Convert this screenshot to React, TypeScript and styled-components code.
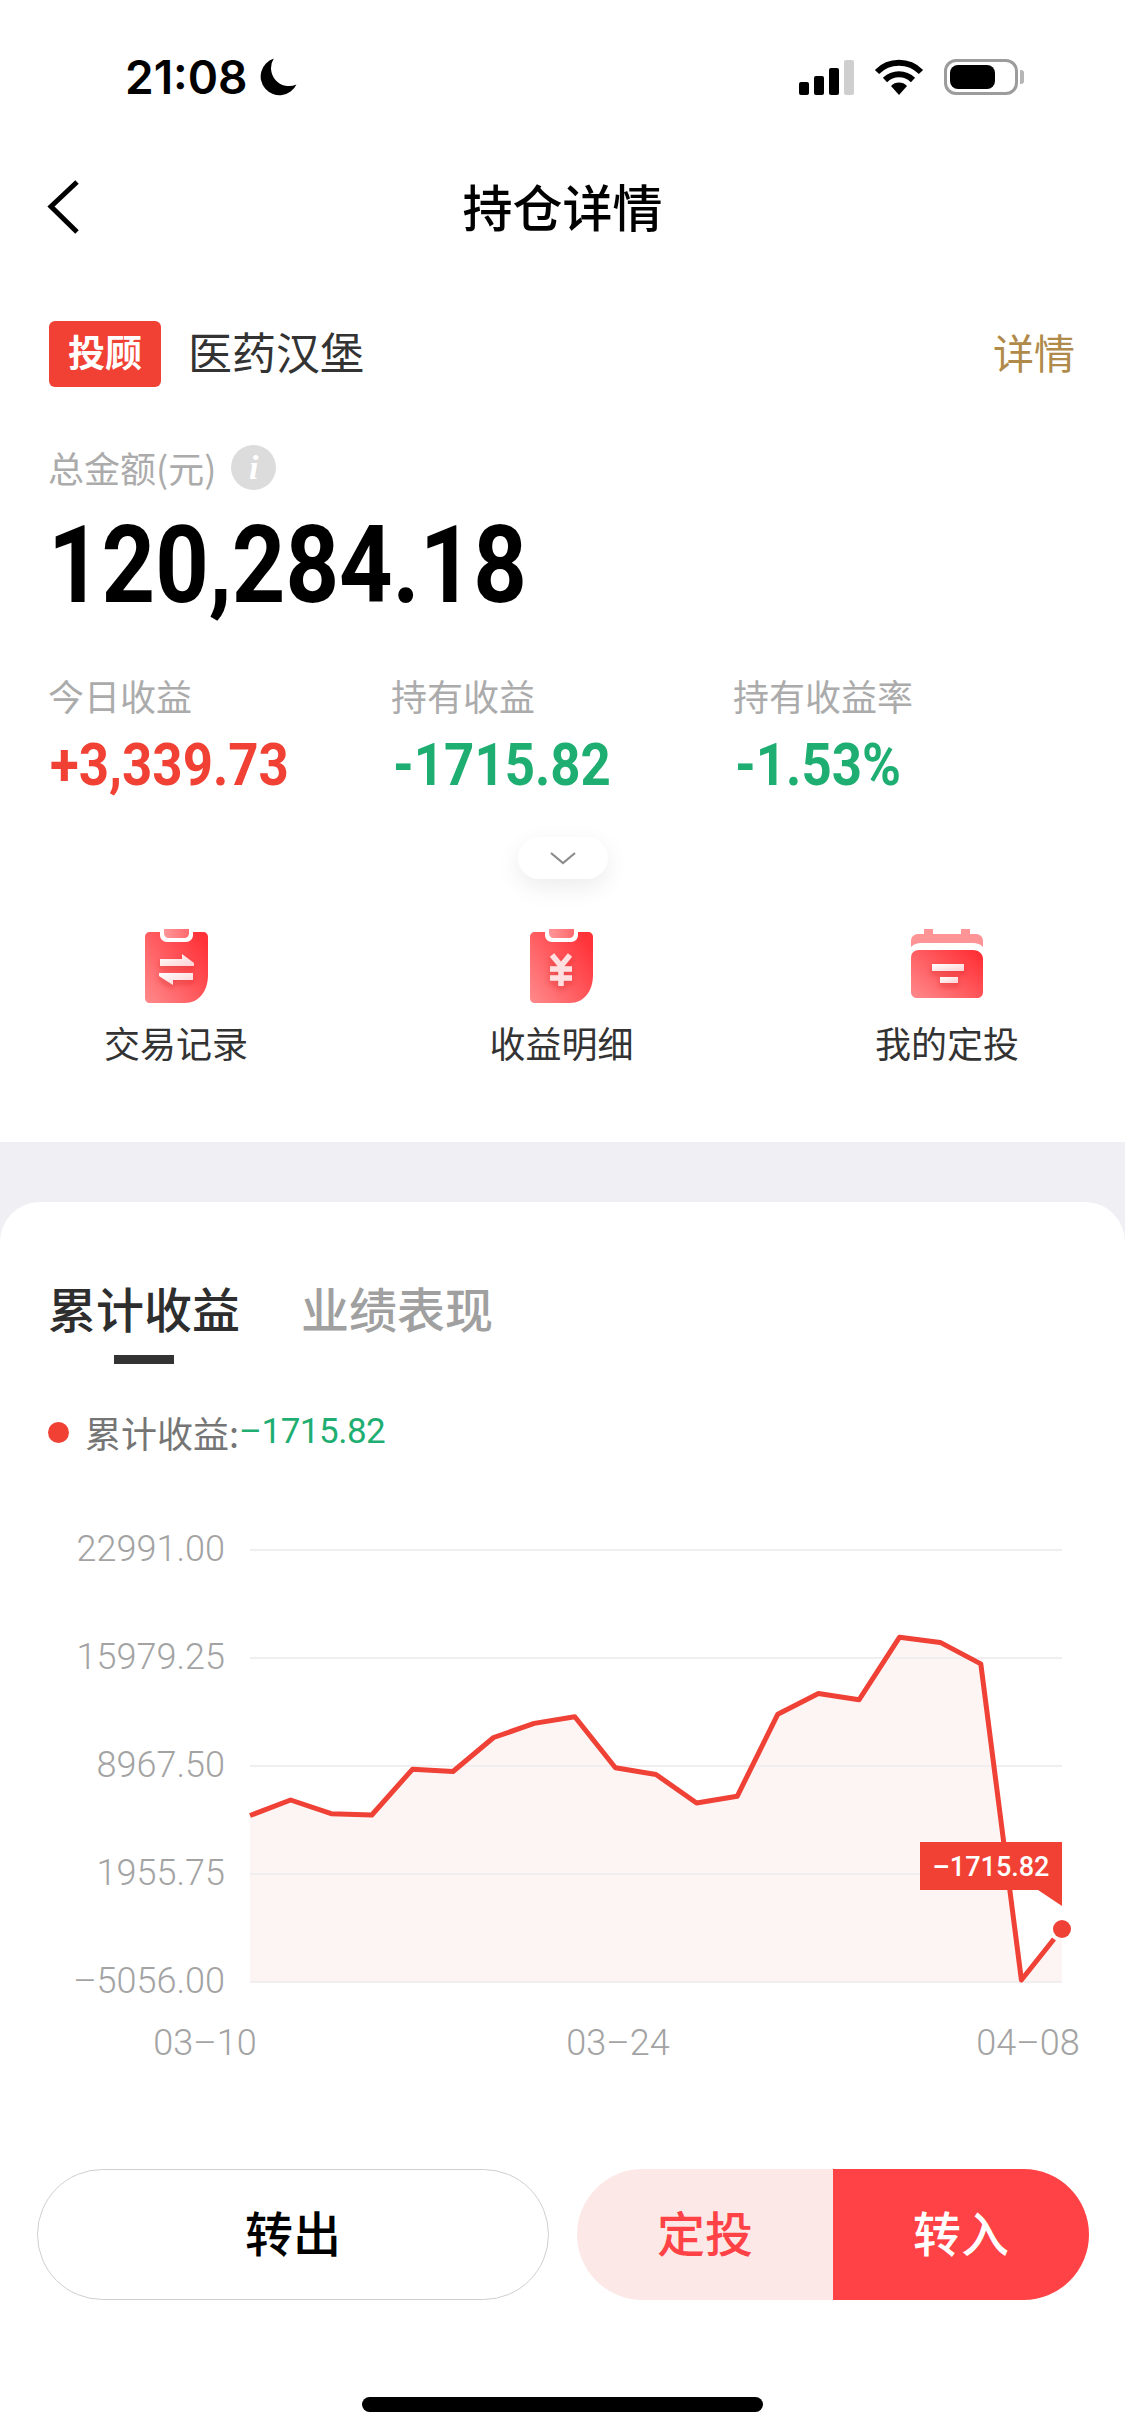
import React from "react";
import styled, { createGlobalStyle } from "styled-components";

const Global = createGlobalStyle`
  html, body { margin: 0; padding: 0; background: #f0f0f4; }
  body { font-family: Roboto, "Noto Sans CJK SC", sans-serif; }
  * { box-sizing: border-box; }
`;

const cjk = `"Noto Sans CJK SC", Roboto, sans-serif`;

const Page = styled.div`
  width: 1125px;
  height: 2436px;
  display: flex;
  flex-direction: column;
  background: #f0f0f4;
  overflow: hidden;
`;
const TopSection = styled.section`
  height: 1142px;
  background: #fff;
  display: flex;
  flex-direction: column;
  flex: none;
`;
const StatusBar = styled.div`
  height: 154px;
  display: flex;
  align-items: center;
  justify-content: space-between;
  padding: 0 107px 0 125px;
`;
const StatusLeft = styled.div`
  display: flex;
  align-items: center;
  gap: 11px;
`;
const Time = styled.span`
  font: 600 46px/1 Inter, sans-serif;
  color: #000;
`;
const StatusRight = styled.div`
  display: flex;
  align-items: center;
  gap: 20px;
`;
const Signal = styled.div`
  display: flex;
  align-items: flex-end;
  gap: 5px;
  height: 35px;
`;
const SignalBar = styled.i<{ $h: number; $off?: boolean }>`
  display: block;
  width: 10px;
  height: ${(p) => p.$h}px;
  border-radius: 2px;
  background: ${(p) => (p.$off ? "#cfcfcf" : "#000")};
`;
const Battery = styled.div`
  position: relative;
  width: 74px;
  height: 36px;
  border: 3px solid #9c9c9c;
  border-radius: 12px;
  padding: 3px;
  &::after {
    content: "";
    position: absolute;
    right: -9px;
    top: 8px;
    width: 4px;
    height: 14px;
    border-radius: 0 3px 3px 0;
    background: #b5b5b5;
  }
`;
const BatteryFill = styled.div`
  width: 45px;
  height: 100%;
  border-radius: 8px;
  background: #000;
`;
const NavBar = styled.header`
  position: relative;
  height: 108px;
  display: flex;
  align-items: center;
  justify-content: center;
`;
const BackIcon = styled.svg`
  position: absolute;
  left: 46px;
  top: 25px;
`;
const Title = styled.h1`
  margin: 0 0 6px;
  font: 500 50px/1 ${cjk};
  color: #000;
`;
const ProductRow = styled.div`
  margin-top: 59px;
  padding: 0 50px 0 49px;
  height: 66px;
  display: flex;
  align-items: center;
`;
const Tag = styled.span`
  width: 112px;
  height: 66px;
  padding-bottom: 3px;
  border-radius: 6px;
  background: #f04134;
  color: #fff;
  font: 700 37px/60px ${cjk};
  text-align: center;
`;
const ProductName = styled.span`
  margin: 0 0 7px 27px;
  flex: 1;
  font: 400 44px/1 ${cjk};
  color: #333;
`;
const DetailLink = styled.a`
  margin-bottom: 6px;
  font: 400 41px/1 ${cjk};
  color: #b08a4a;
`;
const TotalRow = styled.div`
  margin-top: 57px;
  padding-left: 48px;
  height: 46px;
  display: flex;
  align-items: center;
  gap: 15px;
`;
const MutedLabel = styled.span`
  font: 400 36px/44px ${cjk};
  color: #ababab;
`;
const InfoBadge = styled.span`
  width: 45px;
  height: 45px;
  border-radius: 50%;
  background: #dcdcdc;
  color: #fff;
  font: italic 700 34px/45px "Liberation Serif", serif;
  text-align: center;
`;
const BigAmount = styled.div`
  margin: 15px 0 0 48px;
  height: 120px;
  font: 700 108px/120px Roboto, sans-serif;
  color: #000;
  transform: scaleX(0.865);
  transform-origin: left center;
`;
const StatsGrid = styled.div`
  margin-top: 48px;
  padding-left: 48px;
  display: grid;
  grid-template-columns: 343px 342px auto;
`;
const Stat = styled.div`
  display: flex;
  flex-direction: column;
  gap: 18px;
`;
const StatValue = styled.span<{ $color: string }>`
  display: block;
  margin-left: 2px;
  font: 700 59px/60px Roboto, sans-serif;
  color: ${(p) => p.$color};
  transform: scaleX(0.895);
  transform-origin: left center;
`;
const ExpandRow = styled.div`
  margin-top: 42px;
  display: flex;
  justify-content: center;
`;
const ExpandPill = styled.button`
  width: 90px;
  height: 42px;
  border: 0;
  border-radius: 21px;
  background: #fff;
  box-shadow: 0 8px 24px rgba(0, 0, 0, 0.08);
  display: flex;
  align-items: center;
  justify-content: center;
  padding: 0;
`;
const Shortcuts = styled.nav`
  margin-top: 50px;
  padding: 0 78px 0 76px;
  display: flex;
  justify-content: space-between;
`;
const Shortcut = styled.div`
  width: 200px;
  height: 135px;
  display: flex;
  flex-direction: column;
  align-items: center;
  justify-content: space-between;
`;
const ShortcutIcon = styled.svg`
  display: block;
`;
const ShortcutLabel = styled.span`
  font: 400 36px/44px ${cjk};
  color: #333;
`;
const Card = styled.section`
  margin-top: 60px;
  flex: 1;
  background: #fff;
  border-radius: 40px 40px 0 0;
  display: flex;
  flex-direction: column;
`;
const Tabs = styled.div`
  margin-top: 77px;
  padding-left: 48px;
  display: flex;
  gap: 61px;
`;
const Tab = styled.div<{ $active?: boolean }>`
  display: flex;
  flex-direction: column;
  align-items: center;
  font: 500 48px/56px ${cjk};
  color: ${(p) => (p.$active ? "#2e2e2e" : "#a0a0a0")};
  &::after {
    content: "";
    width: 60px;
    height: 9px;
    margin-top: 20px;
    background: ${(p) => (p.$active ? "#333" : "transparent")};
  }
`;
const Legend = styled.div`
  margin-top: 45px;
  padding-left: 48px;
  display: flex;
  align-items: center;
  height: 46px;
  font: 400 36px/42px ${cjk};
  color: #757575;
`;
const LegendDot = styled.i`
  width: 21px;
  height: 21px;
  margin-right: 16px;
  border-radius: 50%;
  background: #f04134;
`;
const LegendValue = styled.span`
  font: 400 35px/42px Roboto, sans-serif;
  letter-spacing: -0.5px;
  color: #1fae72;
`;
const Chart = styled.svg`
  display: block;
  margin-top: 45px;
  flex: none;
`;
const Actions = styled.div`
  margin-top: 99px;
  padding: 0 36px 0 37px;
  display: flex;
  gap: 28px;
`;
const OutlineButton = styled.button`
  width: 512px;
  height: 131px;
  padding: 0 0 7px;
  border: 1px solid #cfcfcf;
  border-radius: 66px;
  background: #fff;
  color: #000;
  font: 500 48px/1 ${cjk};
`;
const SplitButton = styled.div`
  width: 512px;
  height: 131px;
  border-radius: 66px;
  overflow: hidden;
  display: grid;
  grid-template-columns: 256px 256px;
`;
const SplitPart = styled.button<{ $bg: string; $fg: string }>`
  padding: 0 0 7px;
  border: 0;
  background: ${(p) => p.$bg};
  color: ${(p) => p.$fg};
  font: 500 48px/1 ${cjk};
`;
const HomeBar = styled.div`
  width: 401px;
  height: 15px;
  margin: 97px auto 0;
  border-radius: 8px;
  background: #000;
`;

const points: [number, number][] = [
  1815.5, 1800, 1813.7, 1815, 1769.3, 1771.5, 1737.5, 1723.4, 1716.8, 1767.8, 1774.5, 1803, 1796.3,
  1714.2, 1693.5, 1699.8, 1637.2, 1642.4, 1663.9, 1980, 1929.5,
].map((y, i) => [250 + i * 40.6, y]);
const linePts = points.map((p) => p.join(",")).join(" ");
const lastSeg = points.slice(0, 20);
lastSeg.push([1054, 1939]);
const lineVisible = lastSeg.map((p) => p.join(",")).join(" ");
const areaPts = `250,1982 ${linePts} 1062,1982`;
const gridRows = [
  { y: 1550, label: "22991.00" },
  { y: 1658, label: "15979.25" },
  { y: 1766, label: "8967.50" },
  { y: 1874, label: "1955.75" },
  { y: 1982, label: "–5056.00" },
];
const dates = [
  { x: 205, label: "03–10" },
  { x: 618, label: "03–24" },
  { x: 1028, label: "04–08" },
];

const CLIP_BODY =
  "M5 3H15V6C15 10 18 13 22 13H41C45 13 48 10 48 6V3H58C61 3 63 5 63 8V46C63 62 54 74 40 74H5C2 74 0 72 0 69V8C0 5 2 3 5 3Z";

const IconDefs = ({ id }: { id: string }) => (
  <defs>
    <linearGradient id={`${id}-body`} x1="0" y1="1" x2="1" y2="0.2">
      <stop offset="0" stopColor="#ff8a8c" />
      <stop offset="1" stopColor="#ff3238" />
    </linearGradient>
    <linearGradient id={`${id}-mark`} x1="0" y1="0" x2="1" y2="1">
      <stop offset="0" stopColor="#ffffff" />
      <stop offset="1" stopColor="#ffd0d2" />
    </linearGradient>
    <linearGradient id={`${id}-tab`} x1="0" y1="0" x2="1" y2="0">
      <stop offset="0" stopColor="#ff9698" />
      <stop offset="1" stopColor="#ff6a6e" />
    </linearGradient>
    <filter id={`${id}-shadow`} x="-40%" y="-40%" width="180%" height="180%">
      <feDropShadow dx="0" dy="3" stdDeviation="3" floodColor="#c9181f" floodOpacity="0.4" />
    </filter>
  </defs>
);

const TradeIcon = () => (
  <ShortcutIcon width="63" height="74" viewBox="0 0 63 74">
    <IconDefs id="trade" />
    <path d={CLIP_BODY} fill="url(#trade-body)" />
    <path d="M19 0H44V4C44 7 42 9 39 9H24C21 9 19 7 19 4Z" fill="url(#trade-tab)" />
    <g filter="url(#trade-shadow)">
      <path d="M15 30H37V25L49 34V37H15Z" fill="url(#trade-mark)" />
      <path d="M48 44V51H28V56L14 47V44Z" fill="url(#trade-mark)" />
    </g>
  </ShortcutIcon>
);
const YuanIcon = () => (
  <ShortcutIcon width="63" height="74" viewBox="0 0 63 74">
    <IconDefs id="yuan" />
    <path d={CLIP_BODY} fill="url(#yuan-body)" />
    <path d="M19 0H44V4C44 7 42 9 39 9H24C21 9 19 7 19 4Z" fill="url(#yuan-tab)" />
    <g filter="url(#yuan-shadow)">
      <path
        d="M22 26L31 37L40 26M20 40H42M20 49H42M31 37V57"
        fill="none"
        stroke="#ffdfe0"
        strokeWidth="5.5"
        strokeLinejoin="miter"
      />
    </g>
  </ShortcutIcon>
);
const CalendarIcon = () => (
  <ShortcutIcon width="72" height="69" viewBox="0 0 72 69">
    <IconDefs id="cal" />
    <path d="M13 0H22V5H50V0H59V5H65C69 5 72 8 72 12V18C69 15 66 14 62 14H10C6 14 3 15 0 18V12C0 8 3 5 7 5H13Z" fill="#ff9496" />
    <path d="M8 21H62C68 21 72 25 72 30V63C72 67 69 69 66 69H6C3 69 0 67 0 63V29C0 24 3 21 8 21Z" fill="url(#cal-body)" />
    <g filter="url(#cal-shadow)">
      <rect x="21" y="35" width="32" height="7" fill="url(#cal-mark)" />
      <rect x="29" y="48" width="18" height="6" fill="url(#cal-mark)" />
    </g>
  </ShortcutIcon>
);

export default function App() {
  return (
    <Page>
      <Global />
      <TopSection>
        <StatusBar>
          <StatusLeft>
            <Time>21:08</Time>
            <svg width="38" height="38" viewBox="0 0 36 36">
              <path d="M14 0.5A17.8 17.8 0 1 0 35.5 25A17 17 0 0 1 14 0.5Z" fill="#000" />
            </svg>
          </StatusLeft>
          <StatusRight>
            <Signal>
              <SignalBar $h={13} />
              <SignalBar $h={19} />
              <SignalBar $h={27} />
              <SignalBar $h={35} $off />
            </Signal>
            <svg width="50" height="36" viewBox="0 0 50 36">
              <path d="M3 13A31 31 0 0 1 47 13" fill="none" stroke="#000" strokeWidth="6" />
              <path d="M11 21A20 20 0 0 1 39 21" fill="none" stroke="#000" strokeWidth="6" />
              <path d="M17 27A11 11 0 0 1 33 27L25 36Z" fill="#000" />
            </svg>
            <Battery>
              <BatteryFill />
            </Battery>
          </StatusRight>
        </StatusBar>
        <NavBar>
          <BackIcon width="34" height="56" viewBox="0 0 34 56">
            <path d="M31 3L5 27.5L31 53" fill="none" stroke="#000" strokeWidth="5" />
          </BackIcon>
          <Title>持仓详情</Title>
        </NavBar>
        <ProductRow>
          <Tag>投顾</Tag>
          <ProductName>医药汉堡</ProductName>
          <DetailLink>详情</DetailLink>
        </ProductRow>
        <TotalRow>
          <MutedLabel>总金额(元)</MutedLabel>
          <InfoBadge>i</InfoBadge>
        </TotalRow>
        <BigAmount>120,284.18</BigAmount>
        <StatsGrid>
          <Stat>
            <MutedLabel>今日收益</MutedLabel>
            <StatValue $color="#f04134">+3,339.73</StatValue>
          </Stat>
          <Stat>
            <MutedLabel>持有收益</MutedLabel>
            <StatValue $color="#1fae72">-1715.82</StatValue>
          </Stat>
          <Stat>
            <MutedLabel>持有收益率</MutedLabel>
            <StatValue $color="#1fae72">-1.53%</StatValue>
          </Stat>
        </StatsGrid>
        <ExpandRow>
          <ExpandPill aria-label="展开">
            <svg width="28" height="14" viewBox="0 0 28 14">
              <path d="M2 2L14 12L26 2" fill="none" stroke="#8c8c8c" strokeWidth="2.2" />
            </svg>
          </ExpandPill>
        </ExpandRow>
        <Shortcuts>
          <Shortcut>
            <TradeIcon />
            <ShortcutLabel>交易记录</ShortcutLabel>
          </Shortcut>
          <Shortcut>
            <YuanIcon />
            <ShortcutLabel>收益明细</ShortcutLabel>
          </Shortcut>
          <Shortcut>
            <CalendarIcon />
            <ShortcutLabel>我的定投</ShortcutLabel>
          </Shortcut>
        </Shortcuts>
      </TopSection>
      <Card>
        <Tabs>
          <Tab $active>累计收益</Tab>
          <Tab>业绩表现</Tab>
        </Tabs>
        <Legend>
          <LegendDot />
          累计收益:<LegendValue>–1715.82</LegendValue>
        </Legend>
        <Chart width="1125" height="570" viewBox="0 1500 1125 570">
          <polygon points={areaPts} fill="#fdf5f4" />
          {gridRows.map((r) => (
            <g key={r.y}>
              <line x1="250" x2="1062" y1={r.y} y2={r.y} stroke="#f0eeee" strokeWidth="2" />
              <text x="225" y={r.y + 11} textAnchor="end" fontFamily="Roboto" fontWeight="300" fontSize="36" fill="#a3a3a3">
                {r.label}
              </text>
            </g>
          ))}
          {dates.map((d) => (
            <text key={d.x} x={d.x} y="2055" textAnchor="middle" fontFamily="Roboto" fontWeight="300" fontSize="36" fill="#a3a3a3">
              {d.label}
            </text>
          ))}
          <polyline points={lineVisible} fill="none" stroke="#ef4136" strokeWidth="5" strokeLinejoin="round" />
          <circle cx="1062" cy="1929" r="9" fill="#ef4136" />
          <rect x="920" y="1842" width="142" height="48" fill="#f04134" />
          <polygon points="1038,1890 1062,1890 1062,1906" fill="#f04134" />
          <text x="991" y="1876" textAnchor="middle" fontFamily="Roboto" fontWeight="500" fontSize="27" fill="#fff">
            –1715.82
          </text>
        </Chart>
        <Actions>
          <OutlineButton>转出</OutlineButton>
          <SplitButton>
            <SplitPart $bg="#fce9e7" $fg="#ff4245">定投</SplitPart>
            <SplitPart $bg="#ff4245" $fg="#fff">转入</SplitPart>
          </SplitButton>
        </Actions>
        <HomeBar />
      </Card>
    </Page>
  );
}
